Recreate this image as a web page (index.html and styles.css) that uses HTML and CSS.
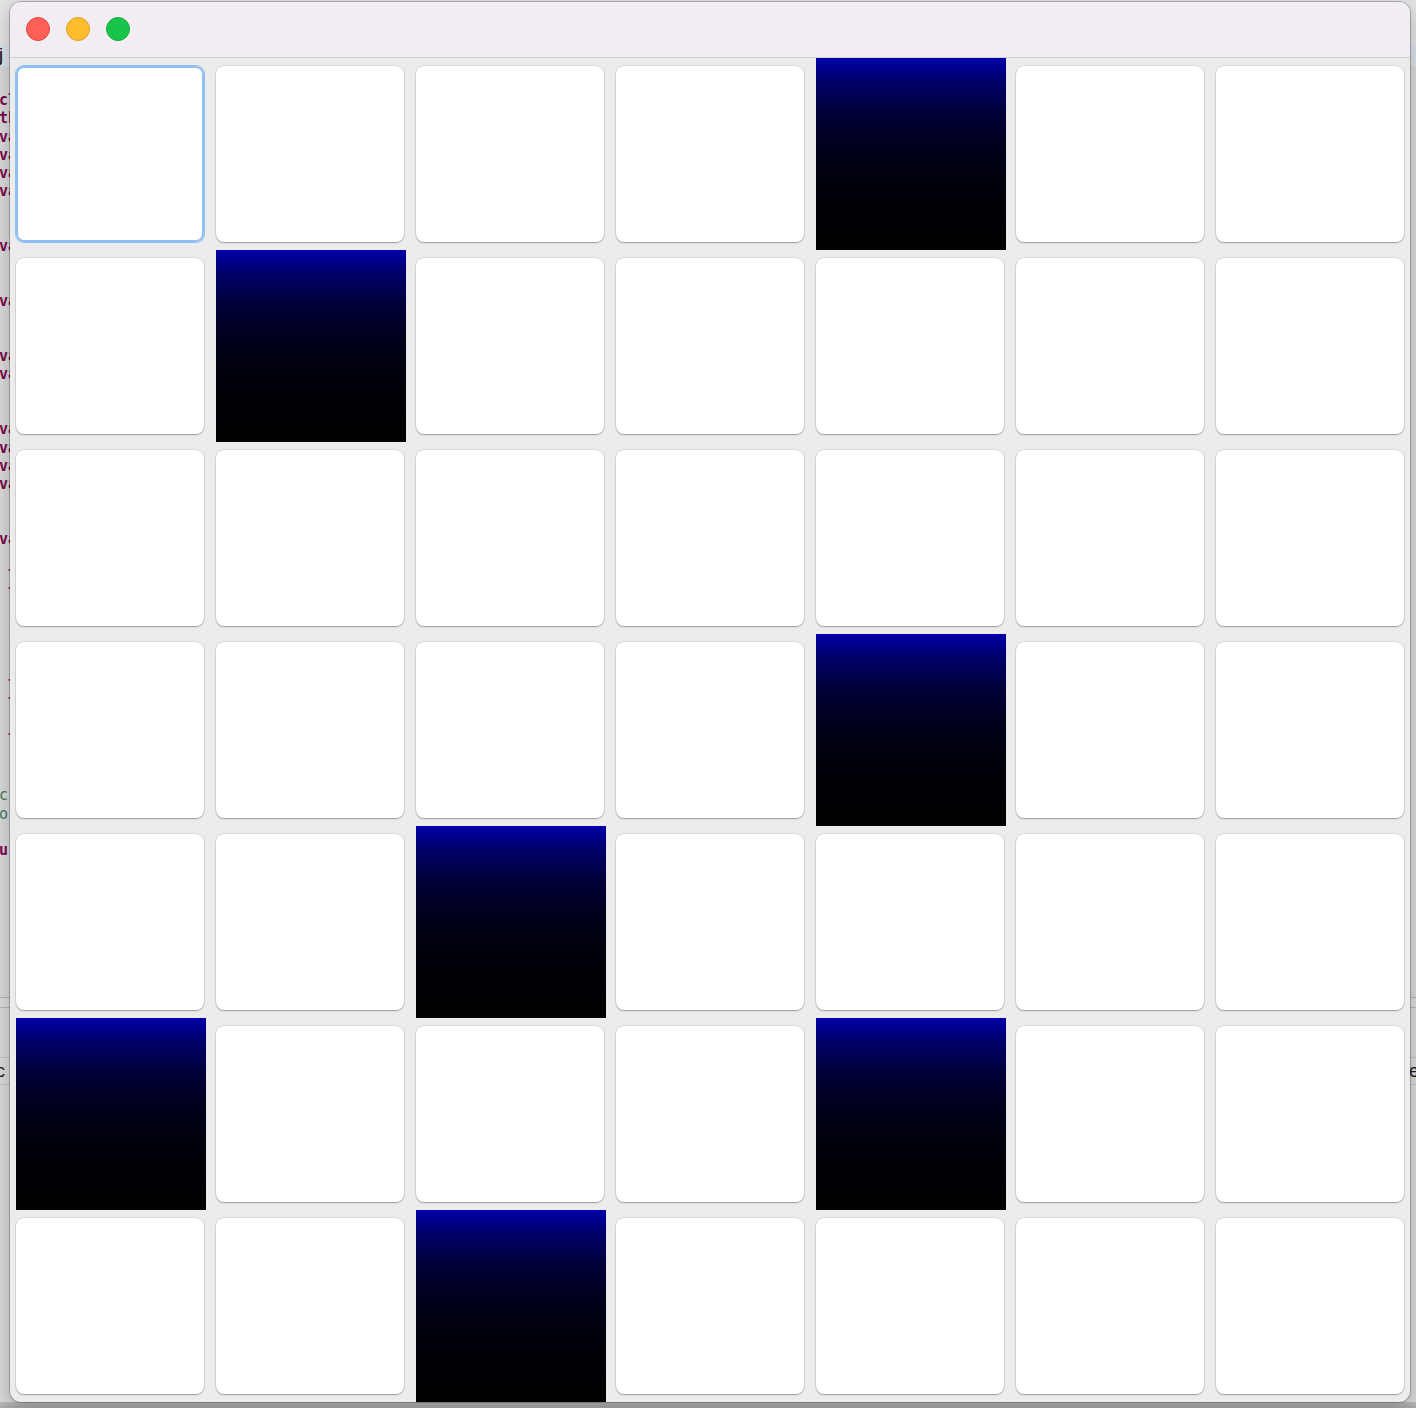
FILE: index.html
```html
<!DOCTYPE html>
<html>
<head>
<meta charset="utf-8">
<title>Grid</title>
<link rel="stylesheet" href="styles.css">
</head>
<body>
<div class="desktop">
  <div class="ide">
    <div class="ide-top"></div>
    <div class="ide-tabbar">j</div>
    <div class="ide-editor">
<pre class="code">class
this
val
val
val
val


val


val


val
val


val
val
val
val


val

 l
 l




 l
 l

 l


<span class="cm">c</span>
<span class="cm">o</span>

u</pre>
    </div>
    <div class="ide-console">
      <div class="console-gap"></div>
      <div class="console-body">
        <div class="console-tabs"><span class="tab-left">c</span><span class="tab-right">e</span></div>
      </div>
    </div>
    <div class="ide-bottom"></div>
  </div>

  <div class="window">
    <div class="titlebar">
      <span class="light red"></span>
      <span class="light yellow"></span>
      <span class="light green"></span>
    </div>
    <div class="grid">
      <div class="cell"><button class="btn focus"></button></div>
      <div class="cell"><button class="btn"></button></div>
      <div class="cell"><button class="btn"></button></div>
      <div class="cell"><button class="btn"></button></div>
      <div class="cell"><div class="dark"></div></div>
      <div class="cell"><button class="btn"></button></div>
      <div class="cell"><button class="btn"></button></div>

      <div class="cell"><button class="btn"></button></div>
      <div class="cell"><div class="dark"></div></div>
      <div class="cell"><button class="btn"></button></div>
      <div class="cell"><button class="btn"></button></div>
      <div class="cell"><button class="btn"></button></div>
      <div class="cell"><button class="btn"></button></div>
      <div class="cell"><button class="btn"></button></div>

      <div class="cell"><button class="btn"></button></div>
      <div class="cell"><button class="btn"></button></div>
      <div class="cell"><button class="btn"></button></div>
      <div class="cell"><button class="btn"></button></div>
      <div class="cell"><button class="btn"></button></div>
      <div class="cell"><button class="btn"></button></div>
      <div class="cell"><button class="btn"></button></div>

      <div class="cell"><button class="btn"></button></div>
      <div class="cell"><button class="btn"></button></div>
      <div class="cell"><button class="btn"></button></div>
      <div class="cell"><button class="btn"></button></div>
      <div class="cell"><div class="dark"></div></div>
      <div class="cell"><button class="btn"></button></div>
      <div class="cell"><button class="btn"></button></div>

      <div class="cell"><button class="btn"></button></div>
      <div class="cell"><button class="btn"></button></div>
      <div class="cell"><div class="dark"></div></div>
      <div class="cell"><button class="btn"></button></div>
      <div class="cell"><button class="btn"></button></div>
      <div class="cell"><button class="btn"></button></div>
      <div class="cell"><button class="btn"></button></div>

      <div class="cell"><div class="dark"></div></div>
      <div class="cell"><button class="btn"></button></div>
      <div class="cell"><button class="btn"></button></div>
      <div class="cell"><button class="btn"></button></div>
      <div class="cell"><div class="dark"></div></div>
      <div class="cell"><button class="btn"></button></div>
      <div class="cell"><button class="btn"></button></div>

      <div class="cell"><button class="btn"></button></div>
      <div class="cell"><button class="btn"></button></div>
      <div class="cell"><div class="dark"></div></div>
      <div class="cell"><button class="btn"></button></div>
      <div class="cell"><button class="btn"></button></div>
      <div class="cell"><button class="btn"></button></div>
      <div class="cell"><button class="btn"></button></div>
    </div>
  </div>
</div>
</body>
</html>
```

FILE: styles.css
```css
html, body {
  margin: 0;
  padding: 0;
}
body {
  width: 1416px;
  height: 1408px;
  overflow: hidden;
  font-family: "Liberation Sans", Arial, sans-serif;
  background: #d6d6d6;
}
.desktop {
  position: relative;
  width: 1416px;
  height: 1408px;
  overflow: hidden;
}

/* background application sliver */
.ide {
  width: 1416px;
  height: 1408px;
  display: flex;
  flex-direction: column;
  background: #d9d9d9;
}
.ide-top {
  height: 44px;
  background: #e4e4e4;
}
.ide-tabbar {
  height: 22px;
  background: #dde2ea;
  font-size: 18px;
  line-height: 22px;
  color: #000000;
  margin-left: -1px;
}
.ide-editor {
  height: 931px;
  background: #dadada;
  overflow: hidden;
}
.code {
  margin: 25px 0 0 -1px;
  font-family: "DejaVu Sans Mono", monospace;
  font-weight: bold;
  font-size: 15px;
  line-height: 18.3px;
  color: #7a0a50;
}
.code .cm {
  color: #3a7a5a;
  font-weight: normal;
}
.ide-console {
  flex: 1;
  display: flex;
  flex-direction: column;
  border-top: 1px solid #b4b4b4;
}
.console-gap {
  height: 9px;
  background: #dcdcdc;
  border-bottom: 1px solid #b9b9b9;
}
.console-body {
  flex: 1;
  background: #dadada;
  padding-top: 49px;
}
.console-tabs {
  height: 26px;
  border-top: 1px solid #c2c2c2;
  border-bottom: 1px solid #c2c2c2;
  display: flex;
  justify-content: space-between;
  align-items: center;
  font-size: 18px;
  color: #222;
}
.tab-left {
  margin-left: -4px;
}
.tab-right {
  margin-right: -3px;
}
.ide-bottom {
  height: 6px;
  background: linear-gradient(#bdbdbd, #a9a9a9);
}

/* the window */
.window {
  position: absolute;
  left: 10px;
  top: 2px;
  width: 1400px;
  height: 1400px;
  border-radius: 11px;
  overflow: hidden;
  background: #ececec;
  box-shadow: 0 0 0 1px rgba(0, 0, 0, 0.22), 0 6px 20px rgba(0, 0, 0, 0.25);
  display: flex;
  flex-direction: column;
}
.titlebar {
  height: 56px;
  box-sizing: border-box;
  flex: none;
  background: #f1edf3;
  border-bottom: 1px solid #d2d0d4;
  display: flex;
  align-items: center;
  padding-left: 16px;
  padding-bottom: 1px;
  gap: 16px;
}
.light {
  width: 24px;
  height: 24px;
  border-radius: 50%;
  box-sizing: border-box;
}
.red {
  background: #fe5f57;
  border: 1px solid #e2463f;
}
.yellow {
  background: #febc2e;
  border: 1px solid #dfa024;
}
.green {
  background: #19c44a;
  border: 1px solid #14ab3d;
}

.grid {
  display: grid;
  grid-template-columns: repeat(7, 190px);
  grid-auto-rows: 192px;
  column-gap: 10px;
  padding-left: 6px;
}
.cell {
  display: flex;
  flex-direction: column;
  align-items: flex-start;
}
.btn {
  margin: 8px 0 0 0;
  padding: 0;
  width: 188px;
  height: 176px;
  border: none;
  border-radius: 8px;
  background: #ffffff;
  box-shadow: 0 0 0 0.5px rgba(0, 0, 0, 0.14), 0 1px 1.5px rgba(0, 0, 0, 0.28);
}
.btn.focus {
  box-shadow: 0 0 0 1px #92bff2, inset 0 0 0 2px #92bff2;
}
.dark {
  width: 190px;
  height: 192px;
  background: linear-gradient(to bottom, #0000aa 0%, #00006a 12%, #00003a 28%, #000018 48%, #000008 70%, #000000 100%);
}
```
